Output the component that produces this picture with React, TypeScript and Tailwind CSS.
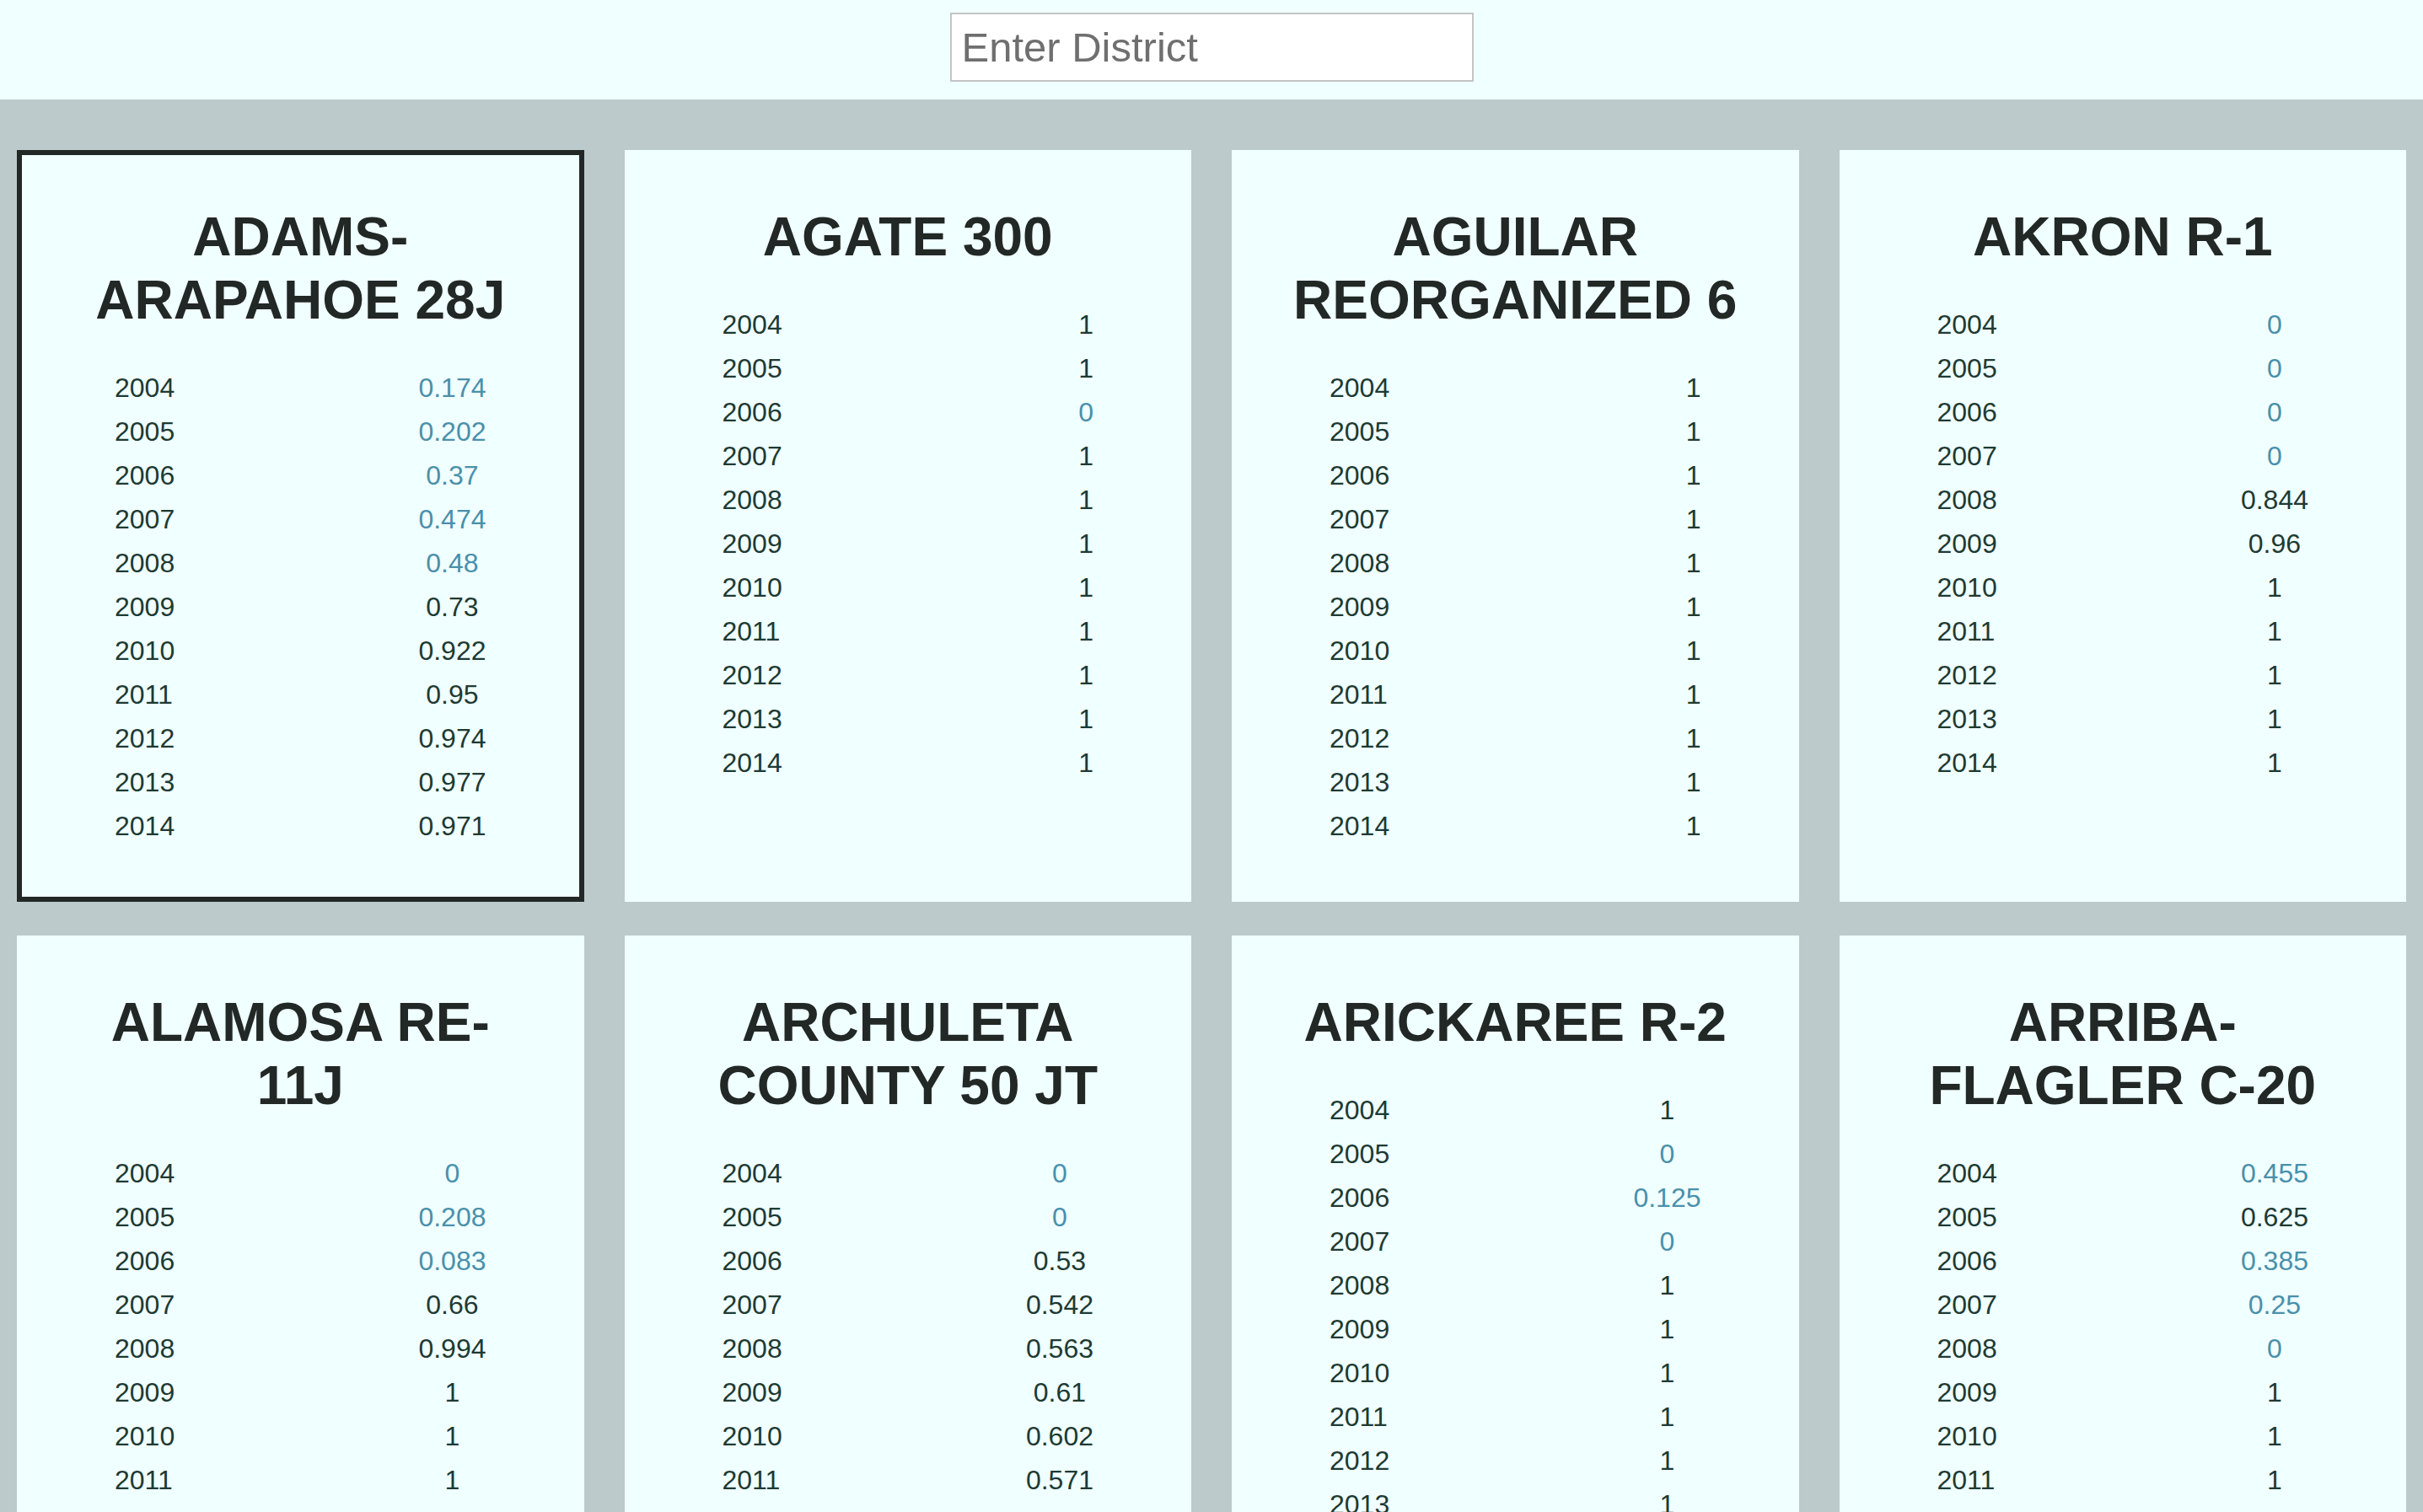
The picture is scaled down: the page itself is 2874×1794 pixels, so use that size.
type District = {
  name: string;
  rates: [string, number][];
};

const YEARS = ['2004', '2005', '2006', '2007', '2008', '2009', '2010', '2011', '2012', '2013', '2014'];

function rows(values: number[]): [string, number][] {
  return YEARS.map((year, i) => [year, values[i]]);
}

const districts: District[] = [
  { name: 'ADAMS-ARAPAHOE 28J', rates: rows([0.174, 0.202, 0.37, 0.474, 0.48, 0.73, 0.922, 0.95, 0.974, 0.977, 0.971]) },
  { name: 'AGATE 300', rates: rows([1, 1, 0, 1, 1, 1, 1, 1, 1, 1, 1]) },
  { name: 'AGUILAR REORGANIZED 6', rates: rows([1, 1, 1, 1, 1, 1, 1, 1, 1, 1, 1]) },
  { name: 'AKRON R-1', rates: rows([0, 0, 0, 0, 0.844, 0.96, 1, 1, 1, 1, 1]) },
  { name: 'ALAMOSA RE-11J', rates: rows([0, 0.208, 0.083, 0.66, 0.994, 1, 1, 1, 1, 1, 1]) },
  { name: 'ARCHULETA COUNTY 50 JT', rates: rows([0, 0, 0.53, 0.542, 0.563, 0.61, 0.602, 0.571, 0.588, 0.6, 0.612]) },
  { name: 'ARICKAREE R-2', rates: rows([1, 0, 0.125, 0, 1, 1, 1, 1, 1, 1, 1]) },
  { name: 'ARRIBA-FLAGLER C-20', rates: rows([0.455, 0.625, 0.385, 0.25, 0, 1, 1, 1, 1, 1, 1]) },
];

function DistrictCard({ district, selected }: { district: District; selected: boolean }) {
  return (
    <div
      className={[
        'border-[6px] bg-[#f0ffff] px-[60px] pt-[60px] pb-[58px]',
        selected ? 'border-[#222826]' : 'border-[#f0ffff]',
      ].join(' ')}
    >
      <h2 className="text-center text-[64px] font-bold leading-[75px] text-[#222826]">
        {district.name}
      </h2>
      {/* year column soaks up the slack, value column is as wide as its widest number */}
      <div className="mt-[40px] grid grid-cols-[1fr_auto] px-[50px] text-[32px] leading-[52px]">
        {district.rates.map(([year, value]) => (
          <div key={year} className="contents">
            <span className="h-[52px] text-left text-[#1e3a33]">{year}</span>
            <span
              className={[
                'h-[52px] text-center',
                value < 0.5 ? 'text-[#4a90ab]' : 'text-[#1e3a33]',
              ].join(' ')}
            >
              {value}
            </span>
          </div>
        ))}
      </div>
    </div>
  );
}

export default function App() {
  return (
    <div className="min-h-screen bg-[#bccacb] font-['Liberation_Sans',Arial,sans-serif]">
      <header className="flex h-[118px] justify-center bg-[#f0ffff] pt-[15px]">
        <input
          type="text"
          placeholder="Enter District"
          className="h-[82px] w-[621px] border-2 border-[#c4c4c4] bg-white px-[12px] text-[49px] text-[#222] outline-none placeholder:text-[#6f6f6f]"
        />
      </header>

      <main className="grid grid-cols-4 gap-x-12 gap-y-10 px-5 pt-[60px] pb-10">
        {districts.map((district, i) => (
          <DistrictCard key={district.name} district={district} selected={i === 0} />
        ))}
      </main>
    </div>
  );
}
